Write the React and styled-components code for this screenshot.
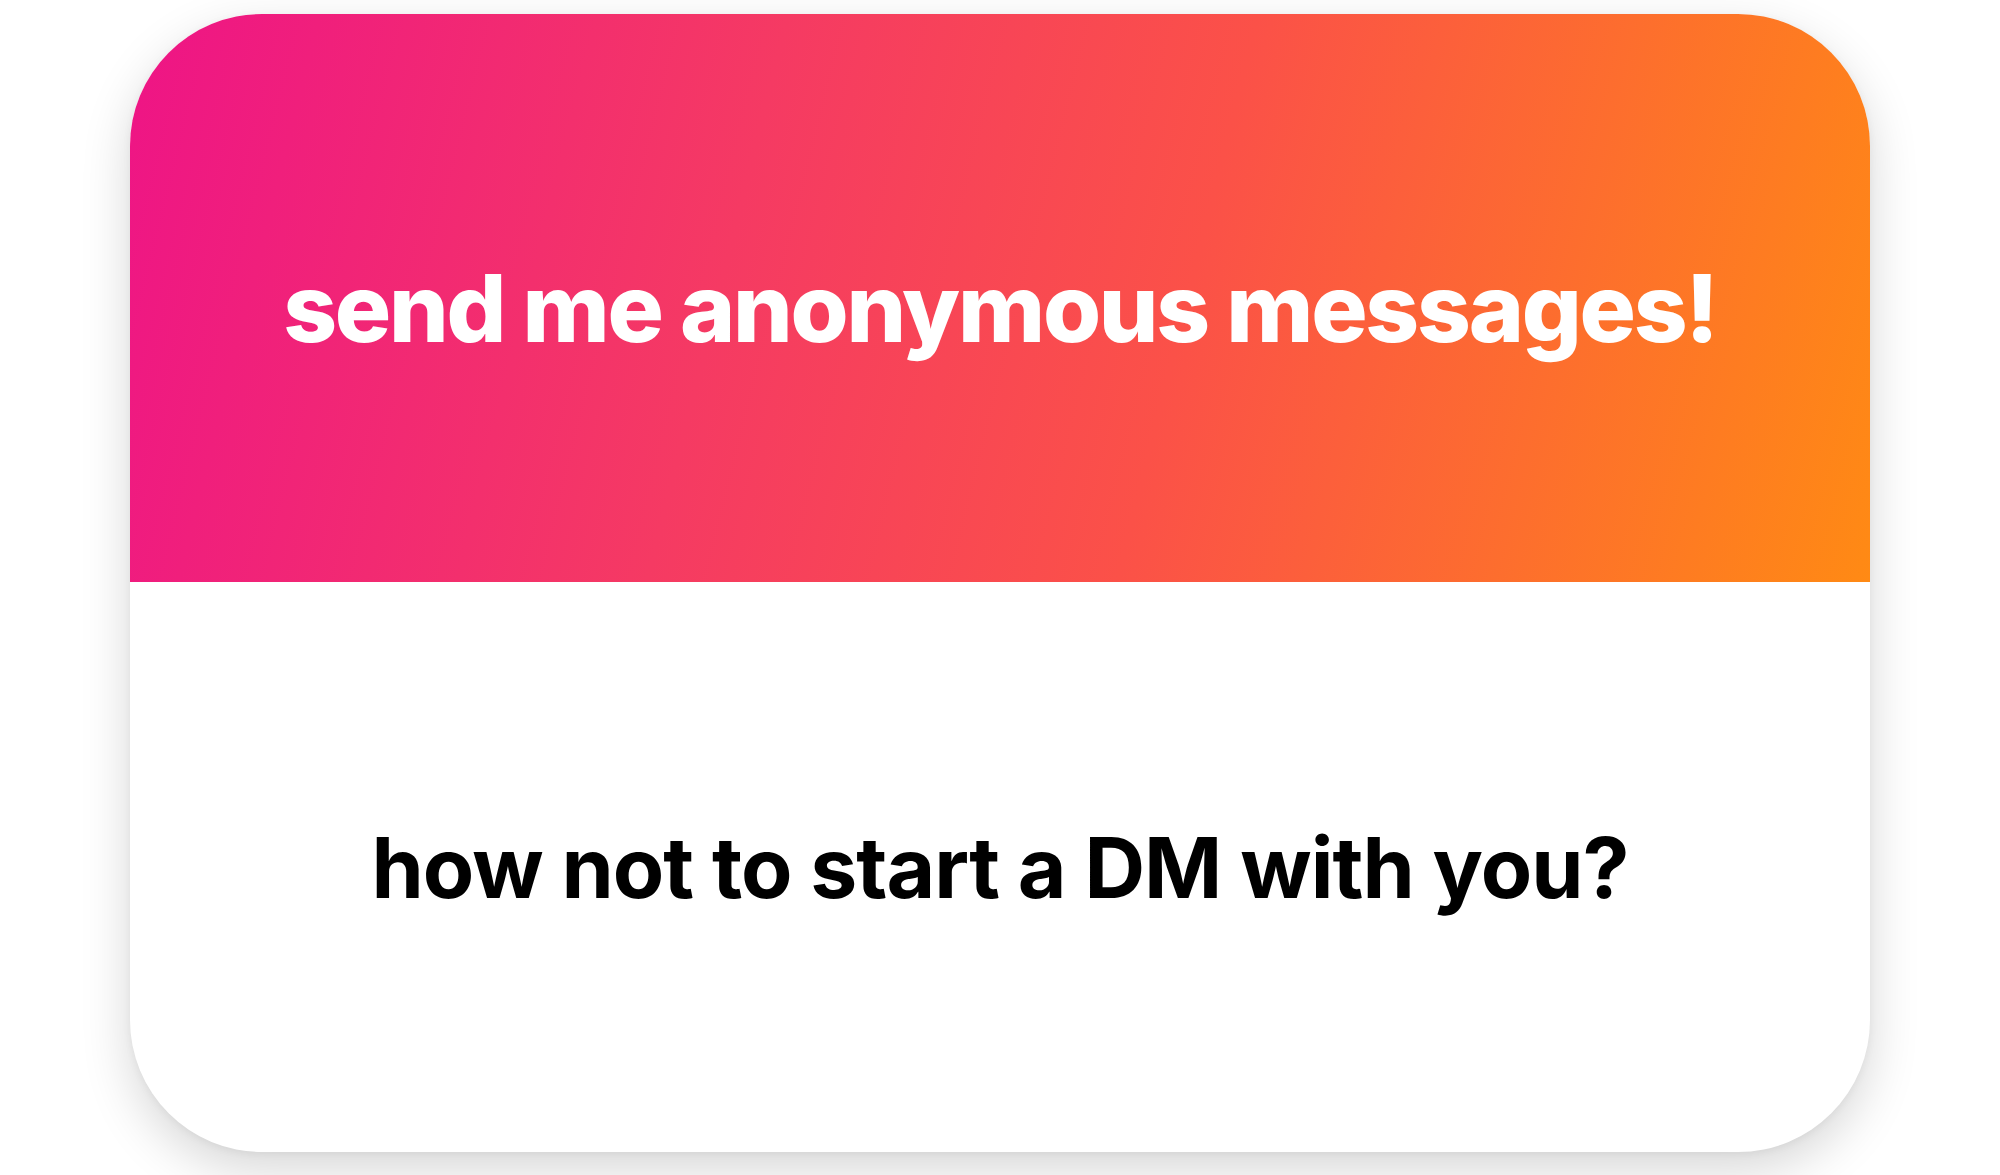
import React from "react";
import styled, { createGlobalStyle } from "styled-components";

const Global = createGlobalStyle`
  html, body { margin: 0; padding: 0; background: #ffffff; }
  body { font-family: Inter, "Helvetica Neue", Arial, sans-serif; }
`;

const Page = styled.div`
  width: 2000px;
  height: 1175px;
  box-sizing: border-box;
  padding: 14px 130px 23px;
  background: #ffffff;
`;

const Card = styled.div`
  width: 1740px;
  height: 1138px;
  border-radius: 132px;
  overflow: hidden;
  display: flex;
  flex-direction: column;
  background: #ffffff;
  box-shadow: 0 18px 50px rgba(0, 0, 0, 0.16), 0 2px 8px rgba(0, 0, 0, 0.05);
`;

const Header = styled.div`
  height: 568px;
  display: flex;
  align-items: center;
  justify-content: center;
  background: linear-gradient(104deg, #ee1486 0%, #f53a63 35%, #fb5148 60%, #ff8a14 100%);
`;

const Title = styled.h1`
  margin: 20px 0 0;
  color: #ffffff;
  font-family: Inter, "Helvetica Neue", Arial, sans-serif;
  font-weight: 800;
  font-size: 94px;
  letter-spacing: -2.25px;
  line-height: 1;
`;

const Body = styled.div`
  flex: 1;
  display: flex;
  align-items: center;
  justify-content: center;
`;

const Question = styled.p`
  margin: 2px 0 0;
  color: #000000;
  font-family: Inter, "Helvetica Neue", Arial, sans-serif;
  font-weight: 700;
  font-size: 84px;
  letter-spacing: -1px;
  line-height: 1;
`;

export default function App() {
  return (
    <>
      <Global />
      <Page>
        <Card>
          <Header>
            <Title>send me anonymous messages!</Title>
          </Header>
          <Body>
            <Question>how not to start a DM with you?</Question>
          </Body>
        </Card>
      </Page>
    </>
  );
}
